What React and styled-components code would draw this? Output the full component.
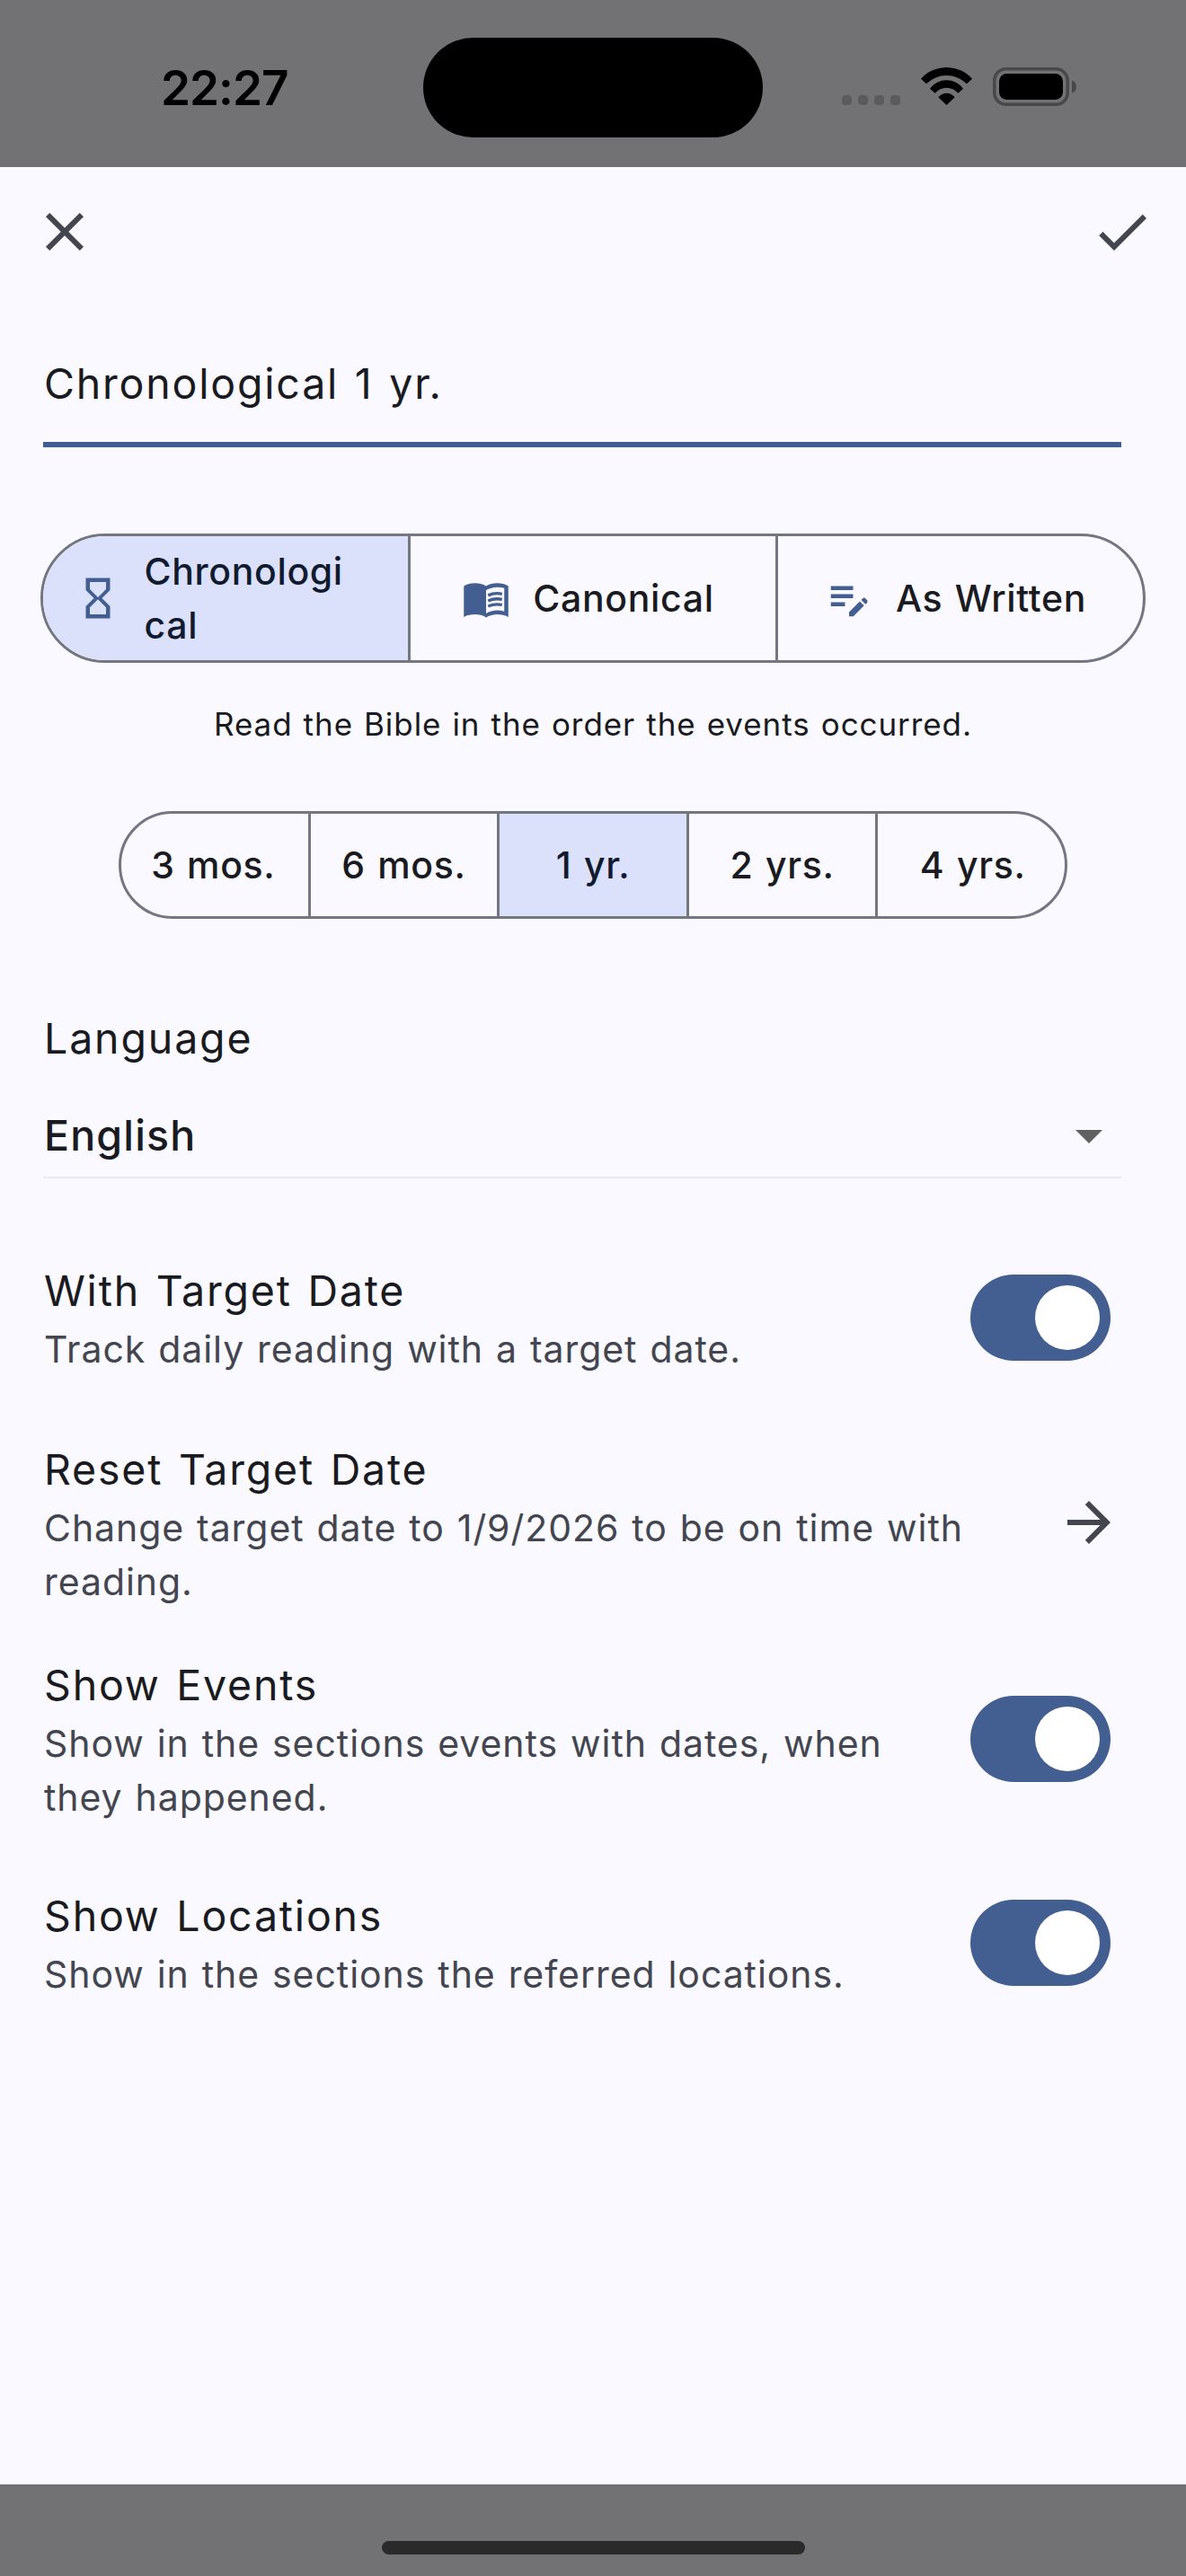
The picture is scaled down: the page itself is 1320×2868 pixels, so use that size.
import React from "react";
import styled, { createGlobalStyle } from "styled-components";
import {
  MdClose,
  MdCheck,
  MdHourglassEmpty,
  MdEditNote,
  MdArrowDropDown,
  MdArrowForward,
} from "react-icons/md";

const color = {
  surface: "#faf9ff",
  scrim: "#727274",
  primary: "#435e91",
  selected: "#dce1fb",
  onSelected: "#111b2f",
  text: "#1a1b20",
  muted: "#44464f",
  outline: "#74777f",
};

const GlobalStyle = createGlobalStyle`
  * { box-sizing: border-box; }
  body {
    margin: 0;
    background: ${color.scrim};
    font-family: Inter, "Liberation Sans", sans-serif;
    color: ${color.text};
  }
  svg { display: block; flex: none; }
`;

const Screen = styled.div`
  width: 1320px;
  height: 2868px;
  display: flex;
  flex-direction: column;
  background: ${color.scrim};
  overflow: hidden;
`;

const StatusBar = styled.header`
  height: 186px;
  flex: none;
  display: grid;
  grid-template-columns: 471px 378px 471px;
  align-items: start;
  padding-top: 42px;
`;

const Clock = styled.div`
  height: 111px;
  padding-left: 179px;
  padding-top: 1px;
  line-height: 111px;
  font-size: 53px;
  font-weight: 600;
  letter-spacing: -1px;
  color: #000;
`;

const Island = styled.div`
  height: 111px;
  border-radius: 56px;
  background: #000;
`;

const StatusIcons = styled.div`
  display: flex;
  align-items: flex-start;
  gap: 23px;
  padding: 33px 0 0 88px;
`;

const SignalDots = styled.div`
  display: flex;
  gap: 7px;
  margin-top: 31px;
`;

const Dot = styled.i`
  width: 11px;
  height: 11px;
  border-radius: 4px;
  background: #5b5b5d;
`;

const Sheet = styled.main`
  height: 2580px;
  flex: none;
  display: flex;
  flex-direction: column;
  background: ${color.surface};
`;

const Toolbar = styled.div`
  display: flex;
  justify-content: space-between;
  padding: 36px 35px 0 36px;
  color: ${color.muted};
`;

const NameField = styled.div`
  margin: 94px 72px 0 48px;
  height: 110px;
  padding-left: 1px;
  border-bottom: 6px solid ${color.primary};
  font-size: 46.5px;
  line-height: 78px;
  letter-spacing: 1.8px;
  word-spacing: 2.8px;
`;

const Segments = styled.div`
  display: flex;
  overflow: hidden;
  align-self: center;
  width: ${(p) => p.$width}px;
  height: ${(p) => p.$height}px;
  border: 3px solid ${color.outline};
  border-radius: ${(p) => p.$height / 2}px;
`;

const Segment = styled.div`
  flex: 1 1 0;
  min-width: 0;
  display: flex;
  align-items: center;
  justify-content: center;
  gap: 25px;
  background: ${(p) => (p.$selected ? color.selected : "transparent")};
  color: ${(p) => (p.$selected ? color.onSelected : color.text)};
  font-size: 41px;
  font-weight: 500;
  line-height: 60px;
  letter-spacing: 0.65px;
  word-spacing: 2px;

  & + & { border-left: 3px solid ${color.outline}; }
  svg { color: ${color.primary}; }
`;

const SegmentLabel = styled.span`
  max-width: ${(p) => (p.$breaks ? 249 : 300)}px;
  padding-right: ${(p) => (p.$breaks ? 14 : 0)}px;
  word-break: ${(p) => (p.$breaks ? "break-all" : "normal")};
`;

const OrderGroup = styled(Segments)`
  margin-top: 96px;
  ${Segment} { padding-right: 11px; }
`;

const Hint = styled.p`
  margin: 44px 0 0;
  text-align: center;
  font-size: 35px;
  line-height: 48px;
  letter-spacing: 0.93px;
  word-spacing: 1.3px;
`;

const DurationGroup = styled(Segments)`
  margin-top: 73px;
  ${Segment} { padding: 0 1.5px; }
  ${Segment}:first-child { padding: 0 3px 0 0; }
  ${Segment}:last-child { padding: 0 0 0 3px; }
`;

const Field = styled.section`
  margin: 97px 72px 0 48px;
  height: 192px;
  border-bottom: 2px solid #eaeaf0;
`;

const FieldLabel = styled.div`
  padding-left: 1px;
  font-size: 46.5px;
  line-height: 72px;
  letter-spacing: 1.85px;
`;

const Select = styled.div`
  display: flex;
  align-items: center;
  justify-content: space-between;
  margin-top: 36px;
  padding-left: 1px;
  font-size: 46.5px;
  font-weight: 500;
  line-height: 72px;
  letter-spacing: 1.15px;
  svg { color: #616161; }
`;

const Row = styled.section`
  display: flex;
  align-items: center;
  justify-content: space-between;
  margin: ${(p) => p.$top}px ${(p) => p.$right}px 0 49px;
`;

const RowTitle = styled.div`
  font-size: 46.5px;
  line-height: 72px;
  letter-spacing: 1.8px;
  word-spacing: 2.8px;
`;

const RowNote = styled.div`
  max-width: ${(p) => p.$max}px;
  margin-top: -1px;
  padding-bottom: 1px;
  font-size: 41px;
  line-height: 60px;
  letter-spacing: 0.94px;
  word-spacing: 1.5px;
  color: ${color.muted};
`;

const Track = styled.div`
  display: flex;
  justify-content: flex-end;
  flex: none;
  width: 156px;
  height: 96px;
  padding: 12px;
  border-radius: 48px;
  background: ${color.primary};
`;

const Thumb = styled.div`
  width: 72px;
  height: 72px;
  border-radius: 50%;
  background: #fff;
`;

const ForwardIcon = styled(MdArrowForward)`
  margin-bottom: 2px;
  color: ${color.muted};
`;

const HomeIndicator = styled.div`
  align-self: center;
  width: 471px;
  height: 15px;
  margin-top: 63px;
  border-radius: 8px;
  background: #2a2a2b;
`;

const Wifi = () => (
  <svg width="57" height="42" viewBox="0 0 57 42" fill="#000">
    <path d="M0 12.7 A38.3 38.3 0 0 1 57 12.7 L51 18.3 A31.9 31.9 0 0 0 6 18.3 Z" />
    <path d="M10 23.7 A22.9 22.9 0 0 1 47 23.7 L41.3 28.7 A16.7 16.7 0 0 0 15.7 28.7 Z" />
    <path d="M19.3 33.3 A11.5 11.5 0 0 1 37.7 33.3 L28.5 42 Z" />
  </svg>
);

const Battery = () => (
  <svg width="94" height="43" viewBox="0 0 94 43">
    <rect x="1.8" y="1.8" width="81.4" height="39.4" rx="13" fill="none" stroke="#48484a" strokeWidth="3.5" />
    <rect x="7" y="7" width="71" height="29" rx="8.5" fill="#000" />
    <path d="M88 14.5 C91 15.5 93 18 93 21.5 C93 25 91 27.5 88 28.5 Z" fill="#48484a" />
  </svg>
);

const OpenBook = ({ size }) => (
  <svg width={size} height={size} viewBox="0 0 24 24" fill="currentColor">
    <path
      fillRule="evenodd"
      d="M6.5 4.5C4.55 4.5 2.45 4.9 1 6v15.3C2.5 20.4 4.6 20 6.5 20c1.95 0 4.05.4 5.5 1.5 1.35-.85 3.8-1.5 5.5-1.5 1.9 0 4 .4 5.5 1.3V6c-1.45-1.1-3.55-1.5-5.5-1.5S13.45 4.9 12 6c-1.45-1.1-3.55-1.5-5.5-1.5zM21 18.5c-1.1-.35-2.3-.5-3.5-.5-1.7 0-4.15.65-5.5 1.5V8c1.35-.85 3.8-1.5 5.5-1.5 1.2 0 2.4.15 3.5.5v11.5z"
    />
    <g fill="none" stroke="currentColor" strokeWidth="1.5">
      <path d="M13 10.6C15 9.7 17.6 9.4 19.9 9.9" />
      <path d="M13 13.3C15 12.4 17.6 12.1 19.9 12.6" />
      <path d="M13 16C15 15.1 17.6 14.8 19.9 15.3" />
    </g>
  </svg>
);

const Switch = () => (
  <Track>
    <Thumb />
  </Track>
);

const SettingRow = ({ title, note, top, right = 84, max = 1000, children }) => (
  <Row $top={top} $right={right}>
    <div>
      <RowTitle>{title}</RowTitle>
      <RowNote $max={max}>{note}</RowNote>
    </div>
    {children}
  </Row>
);

const orders = [
  { label: "Chronological", Icon: MdHourglassEmpty, selected: true },
  { label: "Canonical", Icon: OpenBook },
  { label: "As Written", Icon: MdEditNote },
];

const durations = ["3 mos.", "6 mos.", "1 yr.", "2 yrs.", "4 yrs."];

export default function App() {
  return (
    <>
      <GlobalStyle />
      <Screen>
        <StatusBar>
          <Clock>22:27</Clock>
          <Island />
          <StatusIcons>
            <SignalDots>
              <Dot />
              <Dot />
              <Dot />
              <Dot />
            </SignalDots>
            <Wifi />
            <Battery />
          </StatusIcons>
        </StatusBar>
        <Sheet>
          <Toolbar>
            <MdClose size={72} />
            <MdCheck size={72} />
          </Toolbar>
          <NameField>Chronological 1 yr.</NameField>
          <OrderGroup $width={1230} $height={144}>
            {orders.map(({ label, Icon, selected }) => (
              <Segment key={label} $selected={selected}>
                <Icon size={54} />
                <SegmentLabel $breaks={selected}>{label}</SegmentLabel>
              </Segment>
            ))}
          </OrderGroup>
          <Hint>Read the Bible in the order the events occurred.</Hint>
          <DurationGroup $width={1056} $height={120}>
            {durations.map((label) => (
              <Segment key={label} $selected={label === "1 yr."}>
                {label}
              </Segment>
            ))}
          </DurationGroup>
          <Field>
            <FieldLabel>Language</FieldLabel>
            <Select>
              English
              <MdArrowDropDown size={72} />
            </Select>
          </Field>
          <SettingRow top={89} title="With Target Date" note="Track daily reading with a target date.">
            <Switch />
          </SettingRow>
          <SettingRow
            top={67}
            right={72}
            max={1040}
            title="Reset Target Date"
            note="Change target date to 1/9/2026 to be on time with reading."
          >
            <ForwardIcon size={72} />
          </SettingRow>
          <SettingRow
            top={48}
            max={975}
            title="Show Events"
            note="Show in the sections events with dates, when they happened."
          >
            <Switch />
          </SettingRow>
          <SettingRow top={65} title="Show Locations" note="Show in the sections the referred locations.">
            <Switch />
          </SettingRow>
        </Sheet>
        <HomeIndicator />
      </Screen>
    </>
  );
}
